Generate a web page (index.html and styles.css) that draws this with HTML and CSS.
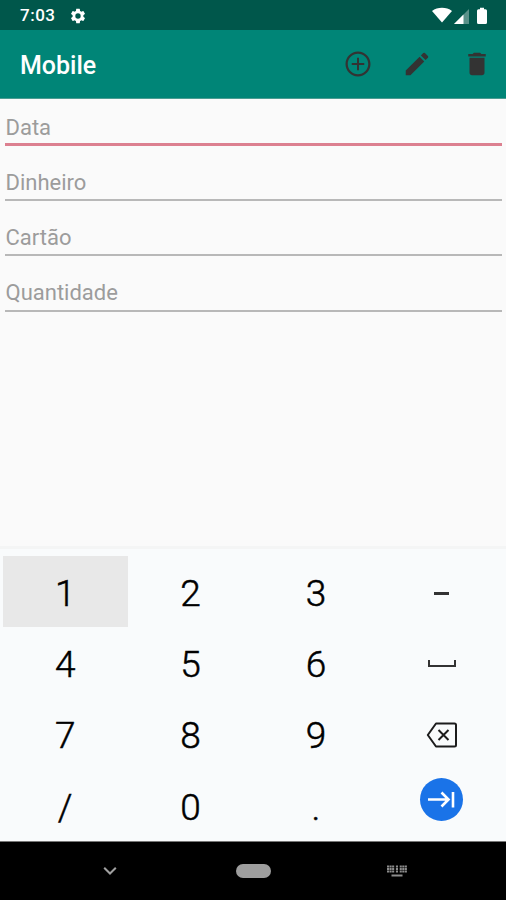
FILE: index.html
```html
<!DOCTYPE html>
<html lang="pt">
<head>
<meta charset="utf-8">
<title>Mobile</title>
<link rel="stylesheet" href="styles.css">
</head>
<body>
<div class="screen">
  <div class="status">
    <span class="clock">7:03</span>
    <svg class="gear" viewBox="0 0 24 24" fill="#fff"><path d="M19.14 12.94c.04-.3.06-.61.06-.94 0-.32-.02-.64-.07-.94l2.03-1.58a.49.49 0 0 0 .12-.61l-1.92-3.32a.49.49 0 0 0-.59-.22l-2.39.96c-.5-.38-1.03-.7-1.62-.94l-.36-2.54a.48.48 0 0 0-.48-.41h-3.84c-.24 0-.43.17-.47.41l-.36 2.54c-.59.24-1.13.57-1.62.94l-2.39-.96a.48.48 0 0 0-.59.22L2.74 8.87c-.12.21-.08.47.12.61l2.03 1.58c-.05.3-.09.63-.09.94s.02.64.07.94l-2.03 1.58a.49.49 0 0 0-.12.61l1.92 3.32c.12.22.37.29.59.22l2.39-.96c.5.38 1.03.7 1.62.94l.36 2.54c.05.24.24.41.48.41h3.84c.24 0 .44-.17.47-.41l.36-2.54c.59-.24 1.13-.56 1.62-.94l2.39.96c.22.08.47 0 .59-.22l1.92-3.32a.48.48 0 0 0-.12-.61l-2.01-1.58zM12 15.6A3.6 3.6 0 1 1 12 8.4a3.6 3.6 0 0 1 0 7.2z"/></svg>
    <svg class="signals" viewBox="0 0 58 18" fill="#fff">
      <path d="M0 4C5.5-.2 14.5-.2 20 4L10 15.500z"/>
      <path d="M37 2v15H22z" opacity=".35"/>
      <path d="M31.500 7.500V17H22z"/>
      <path d="M48 .8h4v1.500h1.500a1.500 1.500 0 0 1 1.500 1.500V15.500a1.500 1.500 0 0 1-1.500 1.500h-7a1.500 1.500 0 0 1-1.500-1.500V3.800a1.500 1.500 0 0 1 1.500-1.500H48z"/>
    </svg>
  </div>
  <header class="appbar">
    <h1 class="title">Mobile</h1>
    <svg class="action" viewBox="0 0 24 24"><path d="M12.800 7h-1.600v4.200H7v1.600h4.200V17h1.600v-4.200H17v-1.600h-4.200V7zM12 2C6.480 2 2 6.480 2 12s4.480 10 10 10 10-4.480 10-10S17.520 2 12 2zm0 18.200c-4.520 0-8.200-3.680-8.200-8.200S7.480 3.800 12 3.800s8.200 3.680 8.200 8.200-3.680 8.200-8.200 8.200z"/></svg>
    <svg class="action" viewBox="0 0 24 24"><path d="M3 17.250V21h3.750L17.810 9.940l-3.750-3.750L3 17.250zM20.710 7.040a1 1 0 0 0 0-1.410l-2.340-2.340a1 1 0 0 0-1.410 0l-1.830 1.830 3.750 3.750 1.830-1.830z"/></svg>
    <svg class="action" viewBox="0 0 24 24"><path d="M6 19c0 1.100.9 2 2 2h8c1.100 0 2-.9 2-2V7H6v12zM19 4h-3.500l-1-1h-5l-1 1H5v2h14V4z"/></svg>
  </header>
  <main class="form">
    <div class="field focused">Data</div>
    <div class="field">Dinheiro</div>
    <div class="field">Cartão</div>
    <div class="field">Quantidade</div>
  </main>
  <section class="keyboard">
    <div class="key pressed"><span>1</span></div>
    <div class="key"><span>2</span></div>
    <div class="key"><span>3</span></div>
    <div class="key"><i class="dash"></i></div>
    <div class="key"><span>4</span></div>
    <div class="key"><span>5</span></div>
    <div class="key"><span>6</span></div>
    <div class="key"><i class="space"></i></div>
    <div class="key"><span>7</span></div>
    <div class="key"><span>8</span></div>
    <div class="key"><span>9</span></div>
    <div class="key"><svg class="backspace" viewBox="0 0 32 26" fill="none" stroke="#1c1c1c" stroke-width="2"><path d="M10 1.500h18.500a1.500 1.500 0 0 1 1.500 1.500v20a1.500 1.500 0 0 1-1.500 1.500H10L1.800 13z" stroke-linejoin="round"/><path d="M12.500 8l10 10M22.500 8l-10 10"/></svg></div>
    <div class="key"><span>/</span></div>
    <div class="key"><span>0</span></div>
    <div class="key"><span>.</span></div>
    <div class="key"><div class="next"><svg viewBox="0 0 43 43" fill="none" stroke="#fff" stroke-width="2.600"><path d="M8 21.500h20M21.500 14.500l7 7-7 7M33 14v15.500"/></svg></div></div>
  </section>
  <nav class="navbar">
    <svg class="nav-down" viewBox="0 0 14 10" fill="none" stroke="#a0a0a0" stroke-width="2"><path d="M1.200 1.700l5.800 5.800 5.800-5.800"/></svg>
    <div class="home"></div>
    <svg class="nav-keys" viewBox="0 0 20 13" fill="none" stroke="#8c8c8c"><path d="M0 1.500h7.300M8.900 1.500h2.200M12.700 1.500H20M0 4h7.300M8.900 4h2.200M12.700 4H20M0 6.500h7.300M8.900 6.500h2.200M12.700 6.500H20" stroke-width="1.900" stroke-dasharray="2.100 .45"/><path d="M4.500 10.500h11" stroke-width="2"/></svg>
  </nav>
</div>
</body>
</html>
```
FILE: styles.css
```css
body {
  margin: 0;
  font-family: Roboto, "Liberation Sans", sans-serif;
}

.screen {
  display: flex;
  flex-direction: column;
  width: 506px;
  height: 900px;
  overflow: hidden;
  background: #fafafa;
}

.status {
  display: flex;
  align-items: center;
  box-sizing: border-box;
  height: 30px;
  padding: 1px 11px 0 20px;
  background: #00574b;
  color: #fff;
}

.clock {
  width: 49px;
  margin-top: -1px;
  font-size: 17px;
  font-weight: 500;
  letter-spacing: 0.5px;
}

.gear {
  width: 18px;
  height: 18px;
}

.signals {
  width: 58px;
  height: 18px;
  margin-left: auto;
  margin-right: 5px;
}

.appbar {
  display: flex;
  align-items: center;
  gap: 29.600px;
  box-sizing: border-box;
  height: 69px;
  padding: 0 14.200px 0 20px;
  background: #008577;
  border-bottom: 1px solid #4b9c92;
}

.title {
  flex: 1;
  margin: 3px 0 0;
  color: #fff;
  font-size: 25px;
  font-weight: 500;
}

.action {
  width: 30px;
  height: 30px;
  fill: #333;
}

.form {
  flex: 1;
  padding: 0 4px 0 5px;
}

.field {
  box-sizing: border-box;
  height: 55.200px;
  padding: 24px 0 0 0.500px;
  border-bottom: 2px solid #b8b8b8;
  color: #9c9c9c;
  font-size: 22px;
  line-height: 26px;
}

.focused {
  height: 47px;
  padding-top: 16px;
  border-bottom: 3px solid #dc8090;
}

.keyboard {
  display: grid;
  grid-template-columns: repeat(4, 125.400px);
  grid-template-rows: repeat(4, 71.300px);
  box-sizing: border-box;
  height: 295px;
  padding: 7px 0 0 3px;
  border-top: 3px solid #f4f5f5;
  background: #f9fbfc;
}

.key {
  display: flex;
  align-items: center;
  justify-content: center;
  color: #000;
  font-size: 37px;
  font-weight: 300;
  line-height: 44px;
  -webkit-text-stroke: 0.500px #000;
}

.key span {
  padding: 4px 1px 0 0;
}

.pressed {
  background: #e8e8e8;
}

.dash {
  width: 15px;
  height: 3px;
  margin-top: 3px;
  background: #333;
}

.space {
  box-sizing: border-box;
  width: 28px;
  height: 7px;
  margin-top: 1px;
  border: 2px solid #333;
  border-top: 0;
}

.backspace {
  width: 32px;
  height: 26px;
  margin-top: 2px;
}

.next {
  width: 43px;
  height: 43px;
  margin-bottom: 12px;
  border-radius: 50%;
  background: #1a73e8;
}

.next svg {
  display: block;
}

.navbar {
  display: grid;
  grid-template-columns: 220px 67px 219px;
  align-items: center;
  justify-items: center;
  box-sizing: border-box;
  height: 59px;
  border-top: 1px solid #777;
  background: #000;
}

.nav-down {
  width: 14px;
  height: 10px;
}

.home {
  width: 35px;
  height: 14px;
  border-radius: 7px;
  background: #9e9e9e;
}

.nav-keys {
  width: 20px;
  height: 13px;
}
```
